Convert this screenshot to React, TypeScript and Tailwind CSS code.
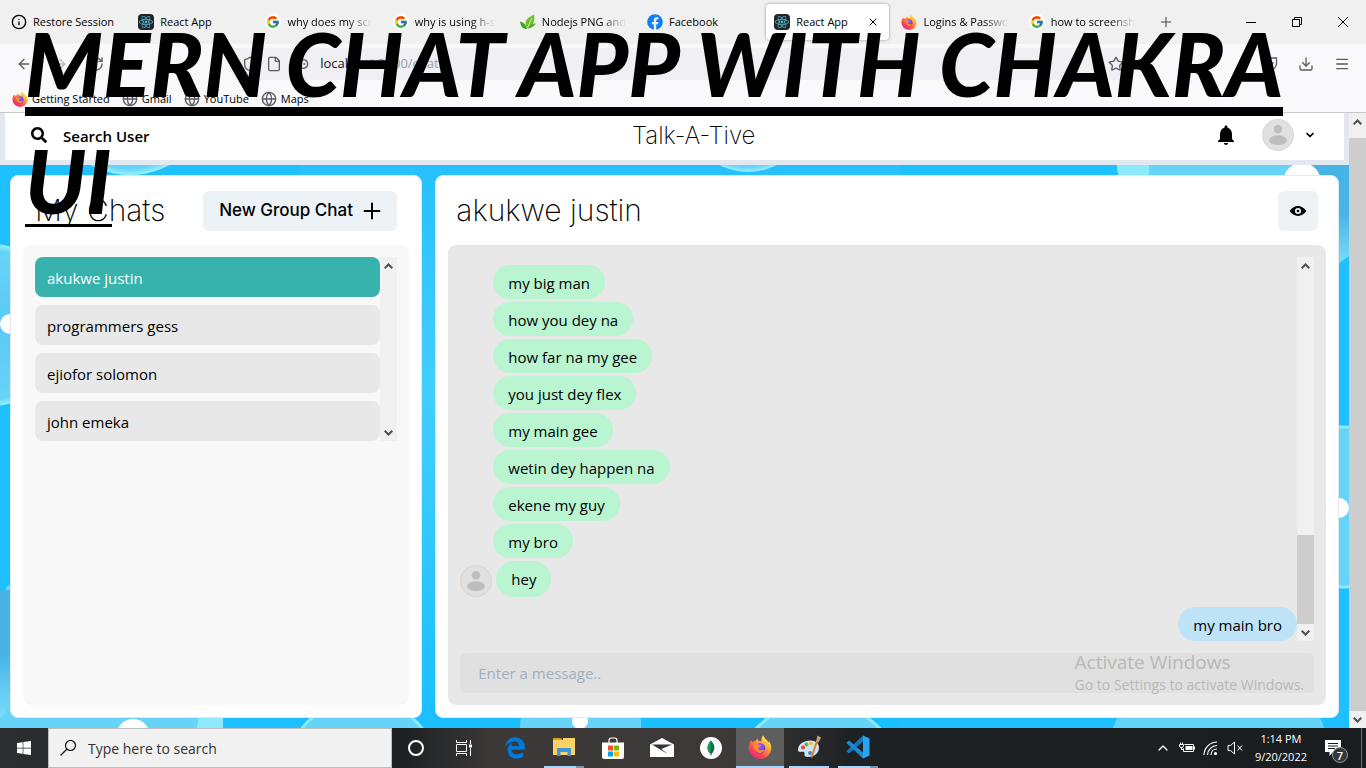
import React from "react";
import {
  ArrowLeft,
  ArrowRight,
  ChevronDown,
  ChevronUp,
  Download,
  File,
  Globe,
  Info,
  KeyRound,
  Menu,
  Plus,
  RotateCw,
  Shield,
  Star,
  X,
} from "lucide-react";
import { FaEdgeLegacy, FaFacebook, FaReact, FaSearch, FaWindows } from "react-icons/fa";
import { FcGoogle } from "react-icons/fc";

const UI_FONT = "font-['Open_Sans','Noto_Sans',sans-serif]";
const HEADING_FONT = "font-['Inter','Noto_Sans',sans-serif]";

function FirefoxIcon({ className }: { className?: string }) {
  return (
    <svg viewBox="0 0 24 24" className={className} aria-hidden="true">
      <defs>
        <linearGradient id="fxBody" x1="0.85" y1="0.1" x2="0.2" y2="0.95">
          <stop offset="0" stopColor="#fff44f" />
          <stop offset="0.35" stopColor="#ffa436" />
          <stop offset="0.7" stopColor="#ff4a4a" />
          <stop offset="1" stopColor="#f0208a" />
        </linearGradient>
        <radialGradient id="fxGlobe" cx="0.5" cy="0.3" r="0.8">
          <stop offset="0" stopColor="#a05cff" />
          <stop offset="1" stopColor="#4a36c8" />
        </radialGradient>
      </defs>
      <path
        fill="url(#fxBody)"
        d="M3.2 5.2c.3.9.8 1.500 1.200 1.900C5 6.400 6.100 6 7.300 6.300 8 4.700 9 3.900 10 3.400c-.3.900-.2 1.700.3 2.300 1 .2 2.300.3 3.200.9C13.100 4 13.600 1.800 15.400.2c.4 2.500 2 3.400 3.600 5 .8.800 1.300 1.700 1.600 2.500.2-.6.200-1 .1-1.700 1.700 2 2.800 4.500 2.600 7.200C23 19.200 18.200 23.800 12.100 23.800 5.800 23.800.8 18.900.7 12.800.7 9.800 1.700 7.200 3.200 5.200z"
      />
      <circle cx="12" cy="13.200" r="5.300" fill="url(#fxGlobe)" />
      <path
        fill="#ff8a2b"
        d="M5.500 9.800c1.500-1.200 3.500-1.100 4.900-.1 1 .3 2 .3 2.500.6-.2 1-1.600 1.300-2.400 1.900-.4 1.400.4 2.700 2 3 1.500.3 2.600-.8 3.700-.3.400.500-.5 2-2.200 2.600-4.500 1.700-8.500-2-8.500-7.700z"
      />
    </svg>
  );
}

function ReactTile() {
  return (
    <span className="flex size-4 items-center justify-center rounded-sm bg-[#222528] text-[#58c4dc]">
      <FaReact className="size-3.5" />
    </span>
  );
}

function GoogleTile() {
  return (
    <span className="flex size-4 items-center justify-center rounded-full bg-white">
      <FcGoogle className="size-[14px]" />
    </span>
  );
}

function LeafIcon() {
  return (
    <svg viewBox="0 0 16 16" className="size-4" aria-hidden="true">
      <path d="M7.500 14.500C3 9 6 4 14 .5c1 6-.5 12-6.500 14z" fill="#6cc02a" />
      <path d="M7 15C6 11 4 8.500.2 7.500.5 12.500 3 15 7 15z" fill="#3fa01c" />
      <path d="M8 14.500c3.500-.5 6-2 7.800-5-3.300-.2-6.300 1.500-7.800 5z" fill="#54b022" />
      <path d="M7.500 13.500 12 4" stroke="#e8f7d8" strokeWidth=".8" />
    </svg>
  );
}

type TabItem = { title: string; icon: React.ReactNode; active?: boolean; faded?: boolean };

const tabs: TabItem[] = [
  { title: "Restore Session", icon: <Info className="size-4" strokeWidth={2} /> },
  { title: "React App", icon: <ReactTile /> },
  { title: "why does my scr", icon: <GoogleTile />, faded: true },
  { title: "why is using h-s", icon: <GoogleTile />, faded: true },
  { title: "Nodejs PNG and", icon: <LeafIcon />, faded: true },
  {
    title: "Facebook",
    icon: (
      <span className="size-4 rounded-full bg-white text-[#0f80f5]">
        <FaFacebook className="size-4" />
      </span>
    ),
  },
  { title: "React App", icon: <ReactTile />, active: true },
  { title: "Logins & Passwo", icon: <FirefoxIcon className="size-4" />, faded: true },
  { title: "how to screensh", icon: <GoogleTile />, faded: true },
];

function TabStrip() {
  return (
    <div className="flex h-11 bg-[#f0f0f0] pl-[3px]">
      <div className="grid w-[84%] grid-cols-9">
        {tabs.map((tab, i) => (
          <div
            key={i}
            className={
              tab.active
                ? "mt-1 mr-1 mb-1 flex items-center rounded bg-white pl-2 shadow-[0_0_3px_rgba(0,0,0,0.4)]"
                : "mt-1 mb-1 flex items-center pl-2 pr-2"
            }
          >
            <button className="flex min-w-0 flex-1 items-center gap-1.5">
              <span className="shrink-0">{tab.icon}</span>
              <span
                className={
                  tab.faded
                    ? "whitespace-nowrap [mask-image:linear-gradient(to_right,black_70%,transparent)]"
                    : "whitespace-nowrap"
                }
              >
                {tab.title}
              </span>
            </button>
            {tab.active && (
              <button aria-label="Close tab" className="pr-2.5">
                <X className="size-3" strokeWidth={2} />
              </button>
            )}
          </div>
        ))}
      </div>
      <button aria-label="New tab" className="ml-2.5 text-[#444]">
        <Plus className="size-4" strokeWidth={1.5} />
      </button>
      <div className="ml-auto flex items-center gap-[36px] pr-[18px]">
        <button aria-label="Minimize">
          <svg viewBox="0 0 10 10" className="size-2.5" stroke="#000" fill="none">
            <path d="M0 5.500h10" />
          </svg>
        </button>
        <button aria-label="Restore">
          <svg viewBox="0 0 10 10" className="size-2.5" stroke="#000" fill="none">
            <path d="M.5 2.500h7v7h-7zM2.500 2.500v-2h7v7h-2" />
          </svg>
        </button>
        <button aria-label="Close">
          <svg viewBox="0 0 10 10" className="size-2.5" stroke="#000" fill="none">
            <path d="M0 0l10 10M10 0L0 10" />
          </svg>
        </button>
      </div>
    </div>
  );
}

function NavBar() {
  return (
    <div className="flex h-10 items-center bg-[#f9f9fb] text-[#5b5b66]">
      <div className="flex w-[17%] items-center gap-5 pl-4">
        <button aria-label="Back">
          <ArrowLeft className="size-4" strokeWidth={2} />
        </button>
        <button aria-label="Forward" className="text-[#bbb]">
          <ArrowRight className="size-4" strokeWidth={2} />
        </button>
        <button aria-label="Reload">
          <RotateCw className="size-4" strokeWidth={2} />
        </button>
      </div>
      <div className="flex h-8 flex-1 items-center rounded bg-[#f0f0f4] px-2.5 text-[13px]">
        <Shield className="size-4" strokeWidth={2} />
        <File className="ml-2 size-4" strokeWidth={2} />
        <KeyRound className="ml-2.5 size-4 rotate-45" strokeWidth={2} />
        <span className="ml-3 flex-1 text-[#9a9aa2]">
          <span className="text-[#15141a]">localhost</span>:3000/chats
        </span>
        <Star className="size-4" strokeWidth={2} />
      </div>
      <div className="flex w-[17%] items-center justify-end gap-5 pr-4">
        <button aria-label="Save to Pocket">
          <svg viewBox="0 0 16 16" className="size-4" fill="none" stroke="currentColor" strokeWidth="1.300">
            <path d="M1.500 2h13v5.500a6.500 6.500 0 0 1-13 0z" />
            <path d="M4.500 6.500 8 9.700l3.500-3.200" />
          </svg>
        </button>
        <button aria-label="Downloads">
          <Download className="size-4" strokeWidth={2} />
        </button>
        <button aria-label="Open menu">
          <Menu className="size-4" strokeWidth={2} />
        </button>
      </div>
    </div>
  );
}

function BookmarksBar() {
  return (
    <div className="flex h-[29px] items-center gap-3 border-b border-[#c8c8c8] bg-[#f9f9fb] pt-0.5 pl-3">
      <a href="#getting-started" className="flex items-center gap-1">
        <FirefoxIcon className="size-4" />
        Getting Started
      </a>
      {["Gmail", "YouTube", "Maps"].map((name) => (
        <a key={name} href={"#" + name} className="flex items-center gap-1">
          <Globe className="size-4 text-[#5b5b66]" strokeWidth={2} />
          {name}
        </a>
      ))}
    </div>
  );
}

function ArrowButton({ up, className }: { up?: boolean; className: string }) {
  return (
    <span className={className}>
      <svg viewBox="0 0 9 6" className="h-1.5 w-[9px]" fill="none" stroke="#505050" strokeWidth="2">
        <path d={up ? "M.7 5.300 4.500 1.500l3.800 3.800" : "M.7.7l3.800 3.800L8.300.7"} />
      </svg>
    </span>
  );
}

const ARROW = "flex h-[17px] w-full shrink-0 items-center justify-center";

function Avatar() {
  return (
    <svg viewBox="0 0 32 32" className="size-8 shrink-0" aria-hidden="true">
      <circle cx="16" cy="16" r="15.700" fill="#e0e0e0" stroke="#dcc8b8" strokeWidth=".6" />
      <circle cx="16" cy="10.200" r="4.200" fill="#bdbdbd" />
      <ellipse cx="16" cy="21.200" rx="8.800" ry="4.900" fill="#bdbdbd" />
    </svg>
  );
}

function Header() {
  return (
    <header className="flex h-[52px] items-center justify-between border-x-[5px] border-b-[5px] border-[#e2e8f0] bg-white px-2.5 pb-[3px]">
      <button className="flex items-center gap-4 pr-6 pl-4 text-[15px] font-semibold">
        <FaSearch className="size-4" />
        <span className="pt-0.5">Search User</span>
      </button>
      <h2 className={`${HEADING_FONT} pt-0.5 text-[24px] font-extralight`}>Talk-A-Tive</h2>
      <div className="flex items-center">
        <button aria-label="Notifications">
          <svg viewBox="0 0 24 24" className="size-6" fill="currentColor">
            <path d="M12 22c1.100 0 2-.9 2-2h-4c0 1.100.89 2 2 2zm6-6v-5c0-3.070-1.640-5.640-4.500-6.320V4c0-.83-.67-1.500-1.500-1.500s-1.500.67-1.500 1.500v.68C7.630 5.360 6 7.920 6 11v5l-2 2v1h16v-1l-2-2z" />
          </svg>
        </button>
        <button aria-label="Account" className="flex items-center gap-2.5 pr-[18px] pl-6">
          <Avatar />
          <ChevronDown className="size-3" strokeWidth={3.5} />
        </button>
      </div>
    </header>
  );
}

const chats = ["akukwe justin", "programmers gess", "ejiofor solomon", "john emeka"];

function MyChats() {
  return (
    <section className="flex w-[31%] flex-col rounded-lg border border-[#e2e8f0] bg-white p-3">
      <div className="flex h-[57px] items-start justify-between px-3 pb-3">
        <h2 className={`${HEADING_FONT} text-[30px] leading-[45px] font-extralight`}>My Chats</h2>
        <button className={`${HEADING_FONT} mt-[3px] flex h-10 items-center gap-2.5 rounded-md bg-[#edf2f7] px-4 text-[17px] font-medium`}>
          New Group Chat
          <svg viewBox="0 0 18 18" className="size-[18px]" stroke="#000" strokeWidth="2" strokeLinecap="round">
            <path d="M9 1.500v15M1.500 9h15" />
          </svg>
        </button>
      </div>
      <div className="flex-1 rounded-lg bg-[#f8f8f8] p-3">
        <div className="flex">
          <ul className="flex min-w-0 flex-1 flex-col gap-2">
            {chats.map((name, i) => (
              <li key={name}>
                <button
                  className={
                    i === 0
                      ? "h-10 w-full rounded-lg bg-[#38b2ac] px-3 pt-0.5 text-left text-white"
                      : "h-10 w-full rounded-lg bg-[#e8e8e8] px-3 pt-0.5 text-left"
                  }
                >
                  {name}
                </button>
              </li>
            ))}
          </ul>
          <div className="flex w-[17px] flex-col justify-between bg-[#f0f0f0]">
            <ArrowButton up className={ARROW} />
            <ArrowButton className={ARROW} />
          </div>
        </div>
      </div>
    </section>
  );
}

const received = [
  "my big man",
  "how you dey na",
  "how far na my gee",
  "you just dey flex",
  "my main gee",
  "wetin dey happen na",
  "ekene my guy",
  "my bro",
];

function ChatWindow() {
  return (
    <section className="flex w-[68%] flex-col rounded-lg border border-[#e2e8f0] bg-white p-3">
      <div className="flex h-[57px] items-start justify-between px-2 pb-3">
        <h2 className={`${HEADING_FONT} text-[30px] leading-[45px] font-extralight`}>akukwe justin</h2>
        <button aria-label="View profile" className="mt-[3px] flex size-10 items-center justify-center rounded-md bg-[#edf2f7]">
          <svg viewBox="0 0 24 24" className="size-4" fill="currentColor">
            <path d="M23.432 10.524C20.787 7.614 16.400 4.538 12 4.600 7.600 4.537 3.213 7.615.568 10.524a2.211 2.211 0 0 0 0 2.948C3.182 16.351 7.507 19.400 11.839 19.400h.308c4.347 0 8.671-3.049 11.288-5.929a2.210 2.210 0 0 0-.003-2.947zM7.400 12a4.600 4.600 0 1 1 4.600 4.600A4.600 4.600 0 0 1 7.400 12z" />
            <circle cx="12" cy="12" r="2" />
          </svg>
        </button>
      </div>
      <div className="flex flex-1 flex-col rounded-lg bg-[#e8e8e8] p-3">
        <div className="flex flex-1">
          <div className="flex min-w-0 flex-1 flex-col justify-end">
            <div className="flex flex-col items-start gap-[3px] pl-[33px]">
              {received.map((text) => (
                <p key={text} className="rounded-full bg-[#b9f5d0] px-[15px] pt-1.5 pb-1 leading-6">
                  {text}
                </p>
              ))}
            </div>
            <div className="mt-[3px] flex items-end gap-1">
              <Avatar />
              <p className="h-9 rounded-full bg-[#b9f5d0] px-[15px] pt-1.5 leading-6">hey</p>
            </div>
            <p className="mt-2.5 self-end rounded-full bg-[#bee3f8] px-[15px] pt-1.5 pb-1 leading-6">my main bro</p>
          </div>
          <div className="flex w-[17px] flex-col bg-[#f0f0f0]">
            <ArrowButton up className={ARROW} />
            <div className="mt-auto h-[89px] bg-[#cdcdcd]" />
            <ArrowButton className={ARROW} />
          </div>
        </div>
        <input
          aria-label="Message"
          placeholder="Enter a message.."
          className="mt-3 h-10 w-full rounded-md bg-[#e0e0e0] px-[18px] placeholder:text-[#a0aec0]"
        />
      </div>
    </section>
  );
}

function BubblesBackdrop() {
  return (
    <svg viewBox="0 0 1349 563" preserveAspectRatio="none" className="absolute inset-0 h-full w-full" aria-hidden="true">
      <defs>
        <radialGradient id="bubble">
          <stop offset="0" stopColor="#58c8f5" />
          <stop offset="0.92" stopColor="#66d3f8" />
          <stop offset="1" stopColor="#9af2fd" />
        </radialGradient>
        <linearGradient id="deep" x1="0" y1="0" x2="0" y2="1">
          <stop offset="0" stopColor="#48b4e6" />
          <stop offset="0.5" stopColor="#48b4e6" />
          <stop offset="1" stopColor="#7adcf8" />
        </linearGradient>
        <linearGradient id="sea" x1="0" y1="0" x2="0" y2="1">
          <stop offset="0" stopColor="#28c0ff" />
          <stop offset="0.4" stopColor="#42ceff" />
          <stop offset="1" stopColor="#1abfff" />
        </linearGradient>
      </defs>
      <rect width="1349" height="563" fill="#1fc0ff" />
      <rect x="300" width="600" height="563" fill="url(#sea)" />
      <circle cx="130" cy="-72" r="82" fill="url(#bubble)" />
      <circle cx="748" cy="-54" r="61" fill="url(#bubble)" />
      <circle cx="-10" cy="160" r="81" fill="url(#bubble)" />
      <circle cx="10" cy="159" r="10" fill="#fff" />
      <path d="M0 470V563H223Q224 545 218 535L8 420Q0 430 0 470z" fill="#66d3f8" />
      <path d="M0 425h10v110q-3 15-10 18z" fill="url(#deep)" />
      <path d="M200 540h23v23h-26z" fill="#8deafb" />
      <circle cx="133" cy="571" r="17" fill="#fff" />
      <circle cx="362" cy="610" r="76" fill="#66d3f8" stroke="#8deafb" strokeWidth="3" />
      <path d="M520 563q0-14 6-20h110q6 6 5 20z" fill="#66d3f8" />
      <circle cx="580" cy="556" r="8" fill="#fff" />
      <circle cx="818" cy="622" r="85" fill="#66d3f8" stroke="#8deafb" strokeWidth="3" />
      <path d="M1113 563q4-12 14-25h180q14 12 17 25z" fill="#66d3f8" />
      <path d="M1117 0q0 6 2 12H1339V98l10-7V0z" fill="#66d3f8" />
      <path d="M1300 0h49v91l-10 7V12h-60z" fill="url(#deep)" />
      <path d="M1117 0q0 6 2 12h30V0z" fill="#8deafb" />
      <circle cx="1302" cy="17" r="19" fill="#fff" />
      <circle cx="1342" cy="342" r="80" fill="#66d3f8" stroke="#8deafb" strokeWidth="3" />
      <circle cx="1339" cy="343" r="10" fill="#fff" />
    </svg>
  );
}

function ChatPage() {
  return (
    <div className="flex flex-1">
      <main className="flex min-w-0 flex-1 flex-col">
        <Header />
        <div className="relative flex flex-1 bg-[#1fc0ff]">
          <BubblesBackdrop />
          <div className="relative flex flex-1 justify-between p-2.5">
            <MyChats />
            <ChatWindow />
          </div>
        </div>
      </main>
      <div className="flex w-[17px] flex-col bg-[#f0f0f0]">
        <ArrowButton up className={ARROW} />
        <div className="mt-2 flex-1 bg-[#cdcdcd]" />
        <ArrowButton className={ARROW} />
      </div>
    </div>
  );
}

type TaskItem = { name: string; icon: React.ReactNode; state?: "open" | "many" | "focused" };

const tasks: TaskItem[] = [
  { name: "Edge", icon: <FaEdgeLegacy className="size-[22px] text-[#0078d7]" /> },
  {
    name: "File Explorer",
    state: "many",
    icon: (
      <svg viewBox="0 0 22 20" className="h-5 w-[22px]">
        <path d="M0 1h8l2 3H0z" fill="#e09b1a" />
        <path d="M0 3h22v15H0z" fill="#fdd264" />
        <path d="M10 1h12v3H10z" fill="#fdd264" />
        <path d="M4 11h14v8h-3.500v-4h-7v4H4z" fill="#3e97d9" />
      </svg>
    ),
  },
  {
    name: "Store",
    icon: (
      <svg viewBox="0 0 24 24" className="size-6">
        <path d="M8 7V4.500a2.500 2.500 0 0 1 2.500-2.500h3A2.500 2.500 0 0 1 16 4.500V7" fill="none" stroke="#fff" strokeWidth="1.200" />
        <path d="M1 6.500h22V21q0 2-2 2H3q-2 0-2-2z" fill="#fff" />
        <path d="M7 9.500h5v5H7z" fill="#f25022" />
        <path d="M13 9.500h5v5h-5z" fill="#7fba00" />
        <path d="M7 15.500h5v5H7z" fill="#00a4ef" />
        <path d="M13 15.500h5v5h-5z" fill="#ffb900" />
      </svg>
    ),
  },
  {
    name: "Mail",
    icon: (
      <svg viewBox="0 0 24 20" className="h-5 w-6">
        <path d="M0 6.500 12 0l12 6.500V19H0z" fill="#fff" />
        <path d="M2 6.500h20l-10.500 4.500 6 5z" fill="#373534" />
      </svg>
    ),
  },
  {
    name: "MongoDB Compass",
    icon: (
      <svg viewBox="0 0 24 24" className="size-6">
        <circle cx="12" cy="12" r="11" fill="#fff" />
        <path d="M12 4.500C7.500 9 7.500 14 11.500 18v1.500h1V18c4-4 4-9-.5-13.500z" fill="#13694a" />
        <path d="M12 4.500c-4.500 4.500-4.500 9.500-.5 13.500z" fill="#10a14e" />
      </svg>
    ),
  },
  { name: "Firefox", state: "focused", icon: <FirefoxIcon className="size-6" /> },
  {
    name: "Paint",
    state: "open",
    icon: (
      <svg viewBox="0 0 24 24" className="size-6">
        <path d="M1 15C1 9 7 5.500 13 5.500c6 0 9 3 9 7.500 0 5-5 9-11 9-3 0-4-1-3.500-3 .5-2-1-2.500-3-2.200C2.500 17 1 17 1 15z" fill="#cfe3f3" />
        <circle cx="6" cy="12.500" r="2" fill="#e0483a" />
        <circle cx="9.500" cy="9.500" r="2" fill="#6cb33e" />
        <circle cx="14" cy="8.500" r="1.800" fill="#f2b92c" />
        <circle cx="13" cy="18" r="2" fill="#3a8edb" />
        <path d="M14.500 22.500 20 6" stroke="#d9822b" strokeWidth="2" />
        <path d="M19 6.500 20.500.5l3.500 2-2.500 5z" fill="#c9a074" />
      </svg>
    ),
  },
  {
    name: "Visual Studio Code",
    state: "many",
    icon: (
      <svg viewBox="0 0 24 24" className="size-6">
        <path d="M17 .5 23.500 3.500v17L17 23.500z" fill="#2aa5f2" />
        <path d="M17 .5v6L3 18.500.3 16.300z" fill="#1478be" />
        <path d="M17 23.500v-6L3 5.500.3 7.700z" fill="#1b8ad6" />
      </svg>
    ),
  },
];

function Taskbar() {
  return (
    <footer className="flex h-10 bg-[linear-gradient(90deg,#2b2d2f_0%,#1f2224_30%,#3b3837_36%,#3d3938_53%,#1f2224_62%,#1a1d20_100%)] text-white">
      <button aria-label="Start" className="flex w-12 items-center justify-center">
        <FaWindows className="size-4" />
      </button>
      <label className="flex w-[344px] items-center gap-3 border border-[#bdbdbd] bg-[#f1f1f1] pl-[11px] text-[#222]">
        <svg viewBox="0 0 16 16" className="size-4 shrink-0" fill="none" stroke="#111" strokeWidth="1.200">
          <circle cx="10.500" cy="5.500" r="5" />
          <path d="M7 9 .5 15.500" />
        </svg>
        <input
          aria-label="Search"
          placeholder="Type here to search"
          className="w-full min-w-0 pt-0.5 text-sm placeholder:text-[#333]"
        />
      </label>
      <button aria-label="Cortana" className="flex w-12 items-center justify-center">
        <span className="size-4 rounded-full border-2 border-white" />
      </button>
      <button aria-label="Task View" className="flex w-12 items-center justify-center">
        <svg viewBox="0 0 16 16" className="size-4" fill="none" stroke="#fff">
          <path d="M.5 0v2.500h10V0M.5 4.500h10v7H.5zM.5 16v-2.500h10V16M14.500 0v4M14.500 8v8" />
          <path d="M13 4.500h3v3h-3z" fill="#fff" stroke="none" />
        </svg>
      </button>
      <div className="ml-[3px] flex gap-px">
        {tasks.map((task) => (
          <button
            key={task.name}
            aria-label={task.name}
            className={
              task.state === "focused"
                ? "flex w-12 flex-col items-center bg-[#5f5e5e]"
                : "flex w-12 flex-col items-center"
            }
          >
            <span className="flex flex-1 items-center">{task.icon}</span>
            {task.state === "focused" && <span className="h-0.5 w-full bg-[#a9d4fb]" />}
            {task.state === "open" && <span className="h-0.5 w-10 bg-[#a9d4fb]" />}
            {task.state === "many" && <span className="h-0.5 w-10 border-r-8 border-[#7b93ab] bg-[#a9d4fb]" />}
          </button>
        ))}
      </div>
      <div className="ml-auto flex items-center gap-2 pr-1">
        <ChevronUp className="size-4" strokeWidth={2} />
        <svg viewBox="0 0 16 12" className="h-3 w-4" fill="none" stroke="#fff">
          <path d="M5.500 2.500h9v7h-10v-3" />
          <path d="M6.500 4h7v4h-7zM15 4.500h1v3h-1z" fill="#fff" stroke="none" />
          <path d="M.5 2.500h4v1.500q0 1.500-2 1.500t-2-1.500zM1.500.5v2M3.500.5v2M2.500 5.500v2h2" />
        </svg>
        <svg viewBox="0 0 16 16" className="size-4" fill="none" stroke="#fff" strokeWidth="1.200">
          <path d="M1 15C1 8 7 2 14 2M4.500 15c0-5 4.500-9.500 9.500-9.500M8 15c0-3.500 2.500-6 6-6" />
          <circle cx="12.500" cy="13.500" r="1.600" fill="#fff" stroke="none" />
        </svg>
        <svg viewBox="0 0 16 16" className="size-4" fill="none" stroke="#fff">
          <path d="M1 5.500h2.500l4-3.500v12l-4-3.500H1zM10.500 5.500l4.500 5M15 5.500l-4.500 5" />
        </svg>
        <div className="ml-1 text-center text-[11px] leading-[18px]">
          <p>1:14 PM</p>
          <p>9/20/2022</p>
        </div>
        <button aria-label="Notifications, 7 new" className="ml-2.5 flex h-10 w-[37px] items-center border-r border-[#6a6c6e]">
          <span className="relative mr-3">
            <svg viewBox="0 0 16 16" className="size-4">
              <path d="M0 0h16v12H8l-3.500 4v-4H0z" fill="#fff" />
              <path d="M3 3.500h10M3 6h10M3 8.500h7" stroke="#1a1d20" />
            </svg>
            <span className="absolute top-[7px] left-[7px] flex size-4 items-center justify-center rounded-full border border-[#999] bg-[#33363a] text-[11px] leading-none font-semibold">
              7
            </span>
          </span>
        </button>
      </div>
    </footer>
  );
}

export default function App() {
  return (
    <div className={`${UI_FONT} relative flex min-h-screen flex-col bg-white text-[15px] text-black`}>
      <div className="text-[11px]">
        <TabStrip />
        <NavBar />
        <BookmarksBar />
      </div>
      <ChatPage />
      <Taskbar />
      <div className="pointer-events-none absolute right-[62px] bottom-[72px] text-[#b8b8b8]">
        <p className="text-[19px] leading-6">Activate Windows</p>
        <p className="text-[14px] leading-[22px]">Go to Settings to activate Windows.</p>
      </div>
      <h1 className="pointer-events-none absolute top-[19px] left-[25px] flex flex-col items-start gap-5 font-['Lato','Liberation_Sans',sans-serif] text-[88px] leading-[88px] font-black whitespace-nowrap italic">
        <span className="border-b-[9px] border-black">MERN CHAT APP WITH CHAKRA</span>
        <span className="border-b-[3px] border-black">UI</span>
      </h1>
    </div>
  );
}
